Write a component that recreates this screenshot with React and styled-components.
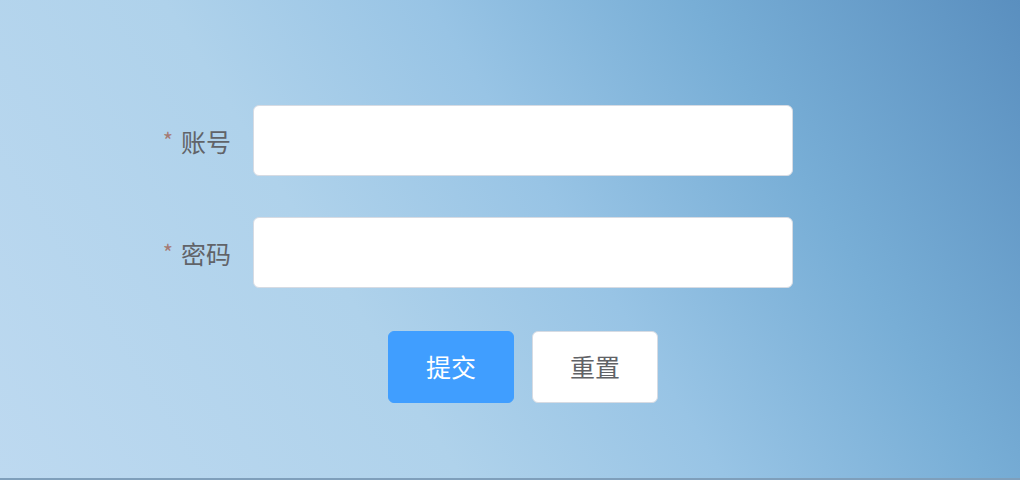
import React from "react";
import styled, { createGlobalStyle } from "styled-components";

const GlobalStyle = createGlobalStyle`
  html, body {
    margin: 0;
    padding: 0;
  }
  body {
    font-family: "Noto Sans CJK SC", "Noto Sans", sans-serif;
  }
`;

const Page = styled.div`
  width: 100%;
  height: 480px;
  box-sizing: border-box;
  border-bottom: 2px solid #7f9fbb;
  background: linear-gradient(58deg, #bdd9f0 0%, #afd2eb 35%, #98c4e5 55%, #78aed6 75%, #5a8fbf 100%);
  padding: 105px 0 0 153px;
  overflow: hidden;
`;

const Form = styled.form`
  display: flex;
  flex-direction: column;
  gap: 41px;
  width: 640px;
`;

const Row = styled.div`
  display: flex;
  align-items: center;
`;

const Label = styled.label`
  width: 100px;
  box-sizing: border-box;
  padding-right: 22px;
  text-align: right;
  font-size: 25px;
  color: #616368;
  white-space: nowrap;
`;

const Star = styled.span`
  color: #a57b74;
  font-size: 22px;
  margin-right: 8px;
  vertical-align: 3px;
`;

const Input = styled.input`
  width: 540px;
  height: 71px;
  box-sizing: border-box;
  border: 1px solid #d6dbe3;
  border-radius: 6px;
  background: #fff;
  outline: none;
  padding: 0 16px;
  font-size: 20px;
`;

const Actions = styled.div`
  display: flex;
  justify-content: center;
  gap: 18px;
  margin-left: 100px;
  width: 540px;
  margin-top: 2px;
`;

const Button = styled.button`
  width: 126px;
  height: 72px;
  box-sizing: border-box;
  border-radius: 6px;
  padding: 0 0 3px;
  font-family: "Noto Sans CJK SC", "Noto Sans", sans-serif;
  font-size: 25px;
  cursor: pointer;
  border: 1px solid ${(p) => (p.primary ? "#409eff" : "#d6dbe3")};
  background: ${(p) => (p.primary ? "#409eff" : "#ffffff")};
  color: ${(p) => (p.primary ? "#ffffff" : "#606266")};
`;

export default function App() {
  return (
    <>
      <GlobalStyle />
      <Page>
        <Form onSubmit={(e) => e.preventDefault()}>
          <Row>
            <Label>
              <Star>*</Star>账号
            </Label>
            <Input type="text" />
          </Row>
          <Row>
            <Label>
              <Star>*</Star>密码
            </Label>
            <Input type="password" />
          </Row>
          <Actions>
            <Button primary type="submit">
              提交
            </Button>
            <Button type="button">重置</Button>
          </Actions>
        </Form>
      </Page>
    </>
  );
}
